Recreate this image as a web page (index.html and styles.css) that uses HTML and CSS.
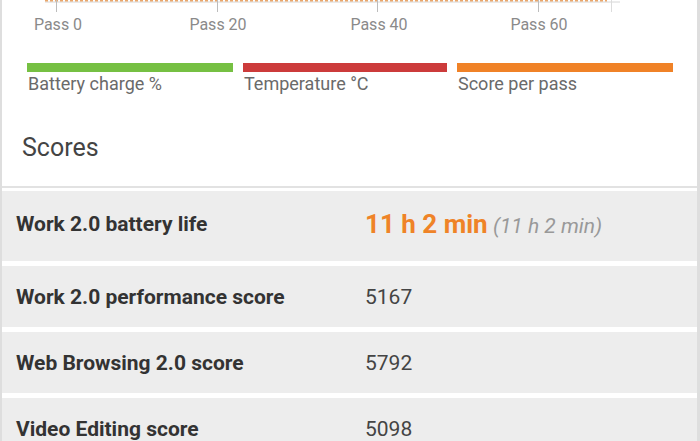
FILE: index.html
```html
<!DOCTYPE html>
<html lang="en">
<head>
    <meta charset="UTF-8">
    <meta name="viewport" content="width=device-width, initial-scale=1.0">
    <title>Battery test - Scores</title>
    <link rel="stylesheet" href="styles.css">
</head>
<body>
    <div class="card">
        <svg class="chart" width="695" height="40" viewBox="0 0 695 40">
            <line x1="43" y1="2" x2="618" y2="2" stroke="#d6d6d6" stroke-width="1"/>
            <line x1="43" y1="0.5" x2="605" y2="0.5" stroke="#e9a66a" stroke-width="2" stroke-dasharray="3 2"/>
            <g stroke="#bdbdbd" stroke-width="1">
                <line x1="54.5" y1="0" x2="54.5" y2="12"/>
                <line x1="215.5" y1="0" x2="215.5" y2="12"/>
                <line x1="375.5" y1="0" x2="375.5" y2="12"/>
                <line x1="536.5" y1="0" x2="536.5" y2="12"/>
                <line x1="609.5" y1="0" x2="609.5" y2="12" stroke="#dcdcdc"/>
            </g>
            <g class="axis-label" text-anchor="middle">
                <text x="56" y="30">Pass 0</text>
                <text x="216" y="30">Pass 20</text>
                <text x="377" y="30">Pass 40</text>
                <text x="537" y="30">Pass 60</text>
            </g>
        </svg>

        <div class="legend">
            <div class="legend-item battery">
                <span class="legend-bar"></span>
                <span class="legend-label">Battery charge %</span>
            </div>
            <div class="legend-item temp">
                <span class="legend-bar"></span>
                <span class="legend-label">Temperature °C</span>
            </div>
            <div class="legend-item score">
                <span class="legend-bar"></span>
                <span class="legend-label">Score per pass</span>
            </div>
        </div>

        <h2 class="section-title">Scores</h2>

        <div class="scores">
            <div class="score-row main">
                <span class="score-name">Work 2.0 battery life</span>
                <span class="score-value"><span class="highlight">11 h 2 min</span> <em>(11 h 2 min)</em></span>
            </div>
            <div class="score-row">
                <span class="score-name">Work 2.0 performance score</span>
                <span class="score-value">5167</span>
            </div>
            <div class="score-row">
                <span class="score-name">Web Browsing 2.0 score</span>
                <span class="score-value">5792</span>
            </div>
            <div class="score-row">
                <span class="score-name">Video Editing score</span>
                <span class="score-value">5098</span>
            </div>
        </div>
    </div>
</body>
</html>
```

FILE: styles.css
```css
* {
    margin: 0;
    padding: 0;
    box-sizing: border-box;
    font-family: Roboto, "Liberation Sans", sans-serif;
}
body {
    background: #ffffff;
    overflow: hidden;
}
.card {
    width: 700px;
    height: 441px;
    overflow: hidden;
    background: white;
    border-left: 2px solid #dedede;
    border-right: 3px solid #dedede;
}
.chart {
    display: block;
}
.axis-label text {
    font-family: Roboto, "Liberation Sans", sans-serif;
    font-size: 16px;
    fill: #8a8a8a;
}
.legend {
    display: flex;
    gap: 10px;
    padding-left: 25px;
    margin-top: 23px;
}
.legend-item {
    display: flex;
    flex-direction: column;
}
.legend-item.battery { width: 206px; }
.legend-item.temp { width: 204px; }
.legend-item.score { width: 216px; }
.legend-bar {
    display: block;
    height: 9px;
}
.battery .legend-bar { background: #76c043; }
.temp .legend-bar { background: #cc3b3b; }
.score .legend-bar { background: #f08227; }
.legend-label {
    margin-top: 1px;
    font-size: 18px;
    line-height: 22px;
    color: #6a6a6a;
    padding-left: 1px;
}
.section-title {
    margin-top: 38px;
    padding-left: 20px;
    font-size: 25px;
    line-height: 30px;
    font-weight: 400;
    color: #444;
    padding-bottom: 23px;
    border-bottom: 2px solid #e2e2e2;
}
.scores {
    padding-top: 3px;
}
.score-row {
    display: grid;
    grid-template-columns: 349px 1fr;
    align-items: center;
    background: #ededed;
    padding-left: 14px;
    height: 61px;
    margin-bottom: 5px;
    padding-top: 1px;
}
.score-row.main {
    height: 70px;
    padding-top: 0;
    padding-bottom: 5px;
}
.score-name {
    font-size: 21px;
    font-weight: 700;
    color: #333;
}
.score-value {
    font-size: 21px;
    color: #444;
}
.highlight {
    font-size: 26px;
    font-weight: 700;
    color: #ef8327;
}
.score-value em {
    font-size: 21px;
    color: #999;
}
```
